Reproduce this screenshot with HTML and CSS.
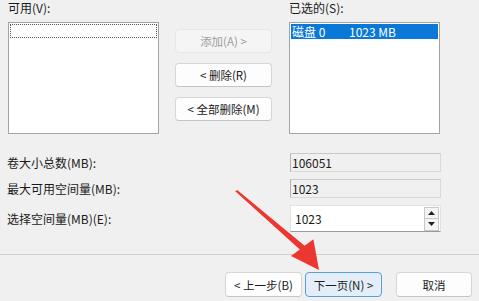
FILE: index.html
```html
<!DOCTYPE html>
<html lang="zh-CN">
<head>
<meta charset="utf-8">
<link rel="stylesheet" href="styles.css">
</head>
<body>
<div class="page">
  <div class="top">
    <div class="col">
      <div class="label">可用(V):</div>
      <div class="listbox"><div class="focus-row"></div></div>
    </div>
    <div class="mid">
      <button class="btn disabled">添加(A) &gt;</button>
      <button class="btn">&lt; 删除(R)</button>
      <button class="btn">&lt; 全部删除(M)</button>
    </div>
    <div class="col">
      <div class="label">已选的(S):</div>
      <div class="listbox"><div class="sel-row"><span class="disk">磁盘 0</span><span>1023 MB</span></div></div>
    </div>
  </div>
  <div class="form">
    <div class="flabel">卷大小总数(MB):</div>
    <div class="ro">106051</div>
    <div class="flabel">最大可用空间量(MB):</div>
    <div class="ro">1023</div>
    <div class="flabel">选择空间量(MB)(E):</div>
    <div class="spin">
      <span class="val">1023</span>
      <div class="spinbtns">
        <div class="sb"><svg width="7" height="4" viewBox="0 0 7 4"><polygon points="3.5,0 7,4 0,4" fill="#222"/></svg></div>
        <div class="sb"><svg width="7" height="4" viewBox="0 0 7 4"><polygon points="0,0 7,0 3.5,4" fill="#222"/></svg></div>
      </div>
    </div>
  </div>
  <div class="sep"></div>
  <div class="footer">
    <button class="btn fbtn">&lt; 上一步(B)</button>
    <button class="btn fbtn primary">下一页(N) &gt;</button>
    <button class="btn fbtn cancel">取消</button>
  </div>
  <svg class="arrow" width="479" height="301" viewBox="0 0 479 301">
    <polygon points="235,191 237.5,190.3 304.6,245.8 313.4,239.2 319,270 291,256 299.8,249.4" fill="#ec3631"/>
  </svg>
</div>
</body>
</html>
```
FILE: styles.css
```css
* { box-sizing: border-box; }
html, body { margin: 0; padding: 0; }
body {
  background: #f0f0f0;
  font-family: "Noto Sans CJK SC", "Noto Sans", sans-serif;
  font-size: 12px;
  color: #1a1a1a;
  width: 479px;
  height: 301px;
  overflow: hidden;
}
.page { position: relative; width: 479px; height: 301px; }
.top {
  display: flex;
  padding-left: 8px;
}
.col { display: flex; flex-direction: column; width: 151px; }
.label { height: 16px; line-height: 16px; margin-bottom: 6px; }
.listbox {
  height: 112px;
  background: #fff;
  border: 1px solid #a3a3a3;
  padding: 1px;
}
.focus-row {
  height: 14px;
  border: 1px dotted #555;
}
.sel-row {
  height: 15px;
  background: #0a78d7;
  color: #fff;
  line-height: 15px;
  display: flex;
  padding-left: 1px;
}
.disk { width: 57px; }
.mid {
  display: flex;
  flex-direction: column;
  gap: 10px;
  width: 97px;
  margin: 29px 17px 0 16px;
}
.btn {
  font-family: "Noto Sans CJK SC", "Noto Sans", sans-serif;
  font-size: 11.5px;
  color: #1a1a1a;
  background: #fdfdfd;
  border: 1px solid #d6d6d6;
  border-bottom-color: #c4c4c4;
  border-radius: 4px;
  height: 24px;
  padding: 0;
  line-height: 20px;
}
.btn.disabled {
  background: #f5f5f5;
  border-color: #e6e6e6;
  color: #9d9d9d;
}
.form {
  display: grid;
  grid-template-columns: 283px 151px;
  grid-template-rows: 19px 19px 27px;
  row-gap: 7px;
  padding-left: 7px;
  margin-top: 19px;
  align-items: center;
}
.flabel { line-height: 16px; }
.ro {
  height: 19px;
  border: 1px solid #d9d9d9;
  border-top-color: #c8c8c8;
  border-left-color: #b5b5b5;
  line-height: 17px;
  padding-left: 1px;
}
.spin {
  height: 27px;
  background: #fff;
  border: 1px solid #e2e2e2;
  border-bottom-color: #9a9a9a;
  display: flex;
  align-items: center;
  justify-content: space-between;
  padding: 1px 1px 1px 4px;
}
.spinbtns {
  display: flex;
  flex-direction: column;
  width: 15px;
  height: 24px;
  border: 1px solid #c8c8c8;
}
.sb {
  flex: 1;
  display: flex;
  align-items: center;
  justify-content: center;
  background: #f4f4f4;
}
.sb + .sb { border-top: 1px solid #c8c8c8; }
.sep {
  height: 1px;
  background: #cfcfcf;
  margin-top: 22px;
}
.footer {
  display: flex;
  justify-content: flex-end;
  padding-right: 7px;
  margin-top: 17px;
}
.fbtn {
  width: 77px;
  height: 25px;
  margin-left: 3px;
}
.fbtn.primary {
  background: #e3eef9;
  border-color: #5a9fd8;
}
.fbtn.cancel { margin-left: 14px; width: 76px; }
.arrow { position: absolute; left: 0; top: 0; pointer-events: none; }
```
